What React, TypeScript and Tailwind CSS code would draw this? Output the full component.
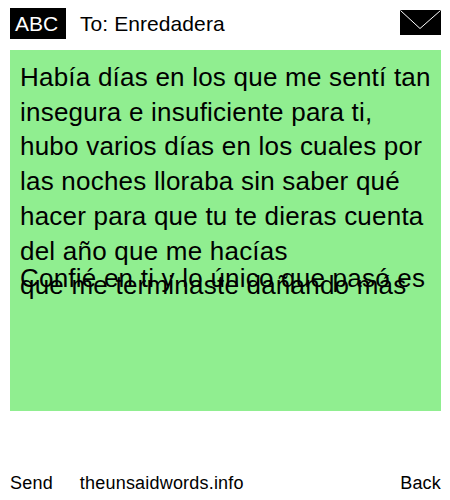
export default function App() {
  return (
    <div className="w-[450px] h-[500px] bg-white text-black font-['Liberation_Sans',Arial,sans-serif] flex flex-col">
      <div className="h-[50px] flex items-start pl-[10px] pr-[9px] pt-[8px]">
        <div className="w-[56px] h-[31px] bg-black text-white text-[21px] leading-[31px] pl-[5px]">ABC</div>
        <div className="ml-[14px] text-[21px] tracking-[0.08px] leading-[31px]">To: Enredadera</div>
        <svg className="ml-auto mt-[2px]" width="41" height="25" viewBox="0 0 41 25">
          <rect width="41" height="25" fill="#000" />
          <path d="M0.5 0.5 L20 18.5 L40.5 0.5" fill="none" stroke="#fff" strokeWidth="1" />
        </svg>
      </div>
      <div className="ml-[10px] w-[431px] h-[361px] bg-[#90ee90] px-[10px] pt-[10px] text-[26px] tracking-[0.22px] leading-[34.7px]">
        <p>Había días en los que me sentí tan insegura e insuficiente para ti, hubo varios días en los cuales por las noches lloraba sin saber qué hacer para que tu te dieras cuenta del año que me hacías</p>
        <p className="mt-[7px] leading-[7px]">Confié en ti y lo único que pasó es que me terminaste dañando más</p>
      </div>
      <div className="flex items-center pl-[10px] pr-[9px] mt-[58px] text-[18px] tracking-[0.2px] leading-[28px]">
        <span>Send</span>
        <span className="ml-[27px]">theunsaidwords.info</span>
        <span className="ml-auto">Back</span>
      </div>
    </div>
  );
}
